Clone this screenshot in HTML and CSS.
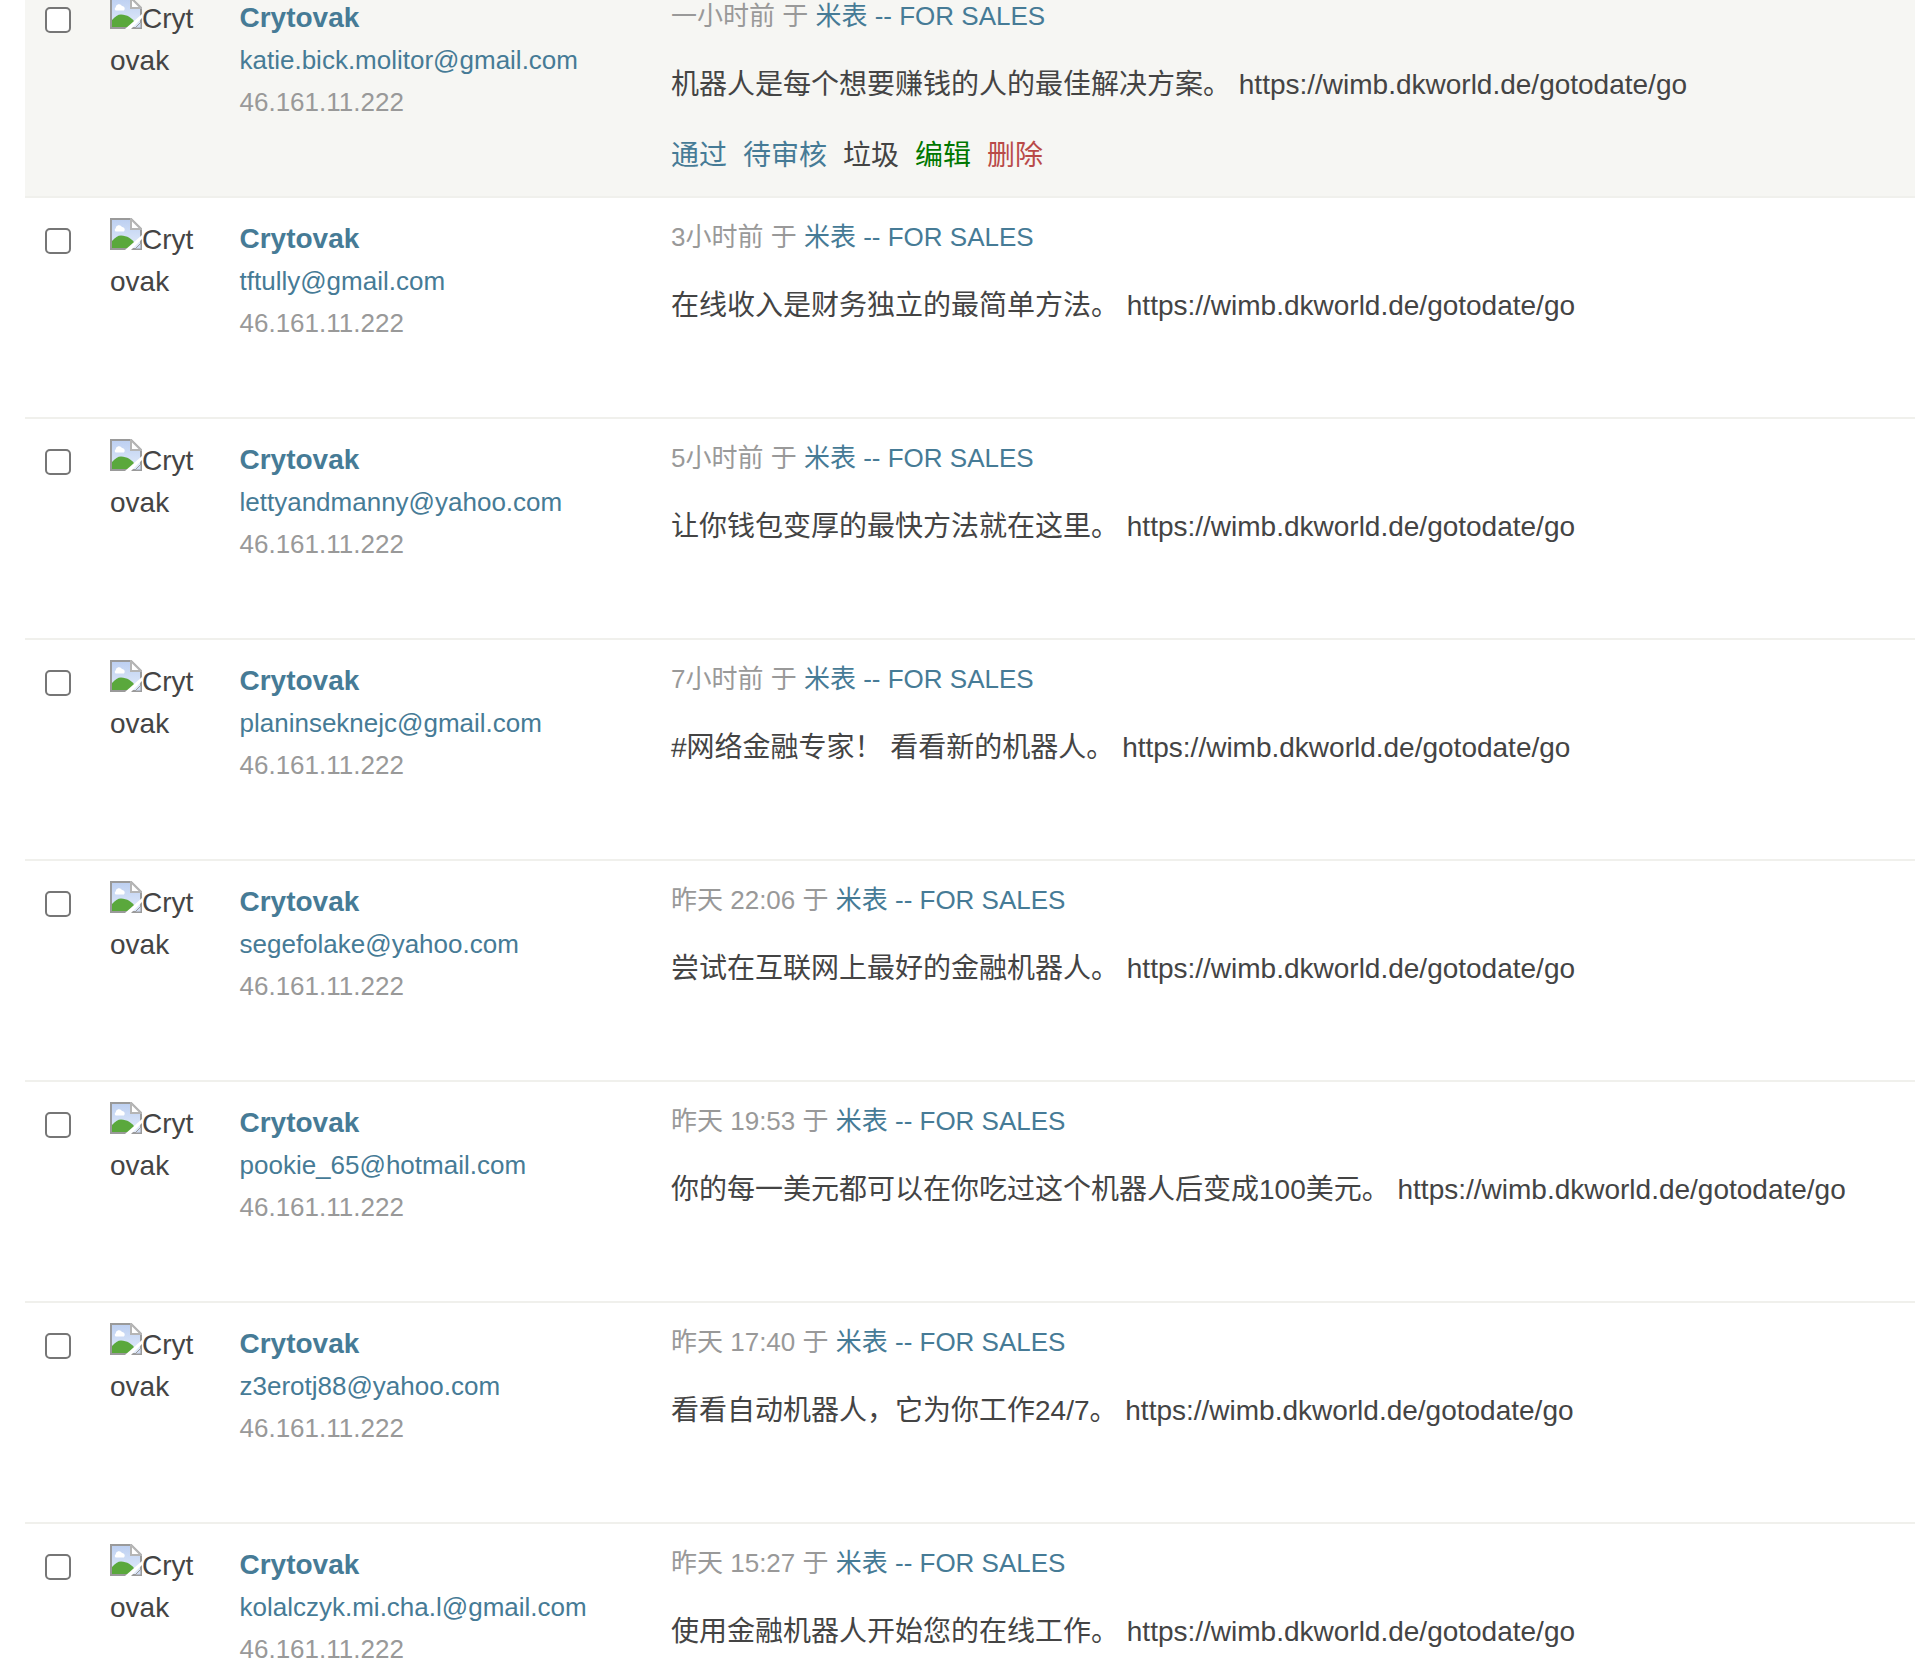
FILE: index.html
```html
<!DOCTYPE html>
<html lang="zh">
<head>
<meta charset="utf-8">
<title>评论管理</title>
<link rel="stylesheet" href="styles.css">
</head>
<body>
<svg class="sprite" width="0" height="0" aria-hidden="true">
  <defs>
    <linearGradient id="sky" x1="0" y1="0" x2="0" y2="1"><stop offset="0" stop-color="#bccff1"/><stop offset="1" stop-color="#e3ecfa"/></linearGradient>
    <symbol id="broken" viewBox="0 0 16 16">
      <path d="M.5.5H10.500L15.500 5.500V15.500H.5Z" fill="url(#sky)" stroke="#9a9a9a"/>
      <path d="M10.500.5V5.500H15.500Z" fill="#fff" stroke="#b5b5b5"/>
      <path d="M2.800 5.300a1.700 1.700 0 0 1 3.200-.8 1.300 1.300 0 0 1 1 2.200H2.800a.8.8 0 0 1 0-1.400Z" fill="#fff"/>
      <path d="M1 15v-3.500C2.500 9.700 4 8.700 5.500 8.700 8.500 8.700 11 10.500 12.500 12.500L10 15Z" fill="#5aa83c"/>
      <path d="M7.500 16 16 8.500V10.500L10.500 16Z" fill="#fff"/>
      <path d="M12.500 15.500 15.500 12.500V15.500Z" fill="#cfdcf4" stroke="#9a9a9a" stroke-width=".5"/>
    </symbol>
  </defs>
</svg>
<main class="list">

<article class="row active">
  <input class="check" type="checkbox">
  <div class="avatar"><svg class="broken"><use href="#broken"/></svg>Crytovak</div>
  <div class="author"><a class="name" href="#">Crytovak</a><a href="#">katie.bick.molitor@gmail.com</a><span class="ip">46.161.11.222</span></div>
  <div class="body">
    <div class="meta">一小时前 于 <a href="#">米表 -- FOR SALES</a></div>
    <p class="text">机器人是每个想要赚钱的人的最佳解决方案。 https://wimb.dkworld.de/gotodate/go</p>
    <div class="actions"><a href="#">通过</a><a href="#">待审核</a><span>垃圾</span><a class="edit" href="#">编辑</a><a class="del" href="#">删除</a></div>
  </div>
</article>

<article class="row">
  <input class="check" type="checkbox">
  <div class="avatar"><svg class="broken"><use href="#broken"/></svg>Crytovak</div>
  <div class="author"><a class="name" href="#">Crytovak</a><a href="#">tftully@gmail.com</a><span class="ip">46.161.11.222</span></div>
  <div class="body">
    <div class="meta">3小时前 于 <a href="#">米表 -- FOR SALES</a></div>
    <p class="text">在线收入是财务独立的最简单方法。 https://wimb.dkworld.de/gotodate/go</p>
  </div>
</article>

<article class="row">
  <input class="check" type="checkbox">
  <div class="avatar"><svg class="broken"><use href="#broken"/></svg>Crytovak</div>
  <div class="author"><a class="name" href="#">Crytovak</a><a href="#">lettyandmanny@yahoo.com</a><span class="ip">46.161.11.222</span></div>
  <div class="body">
    <div class="meta">5小时前 于 <a href="#">米表 -- FOR SALES</a></div>
    <p class="text">让你钱包变厚的最快方法就在这里。 https://wimb.dkworld.de/gotodate/go</p>
  </div>
</article>

<article class="row">
  <input class="check" type="checkbox">
  <div class="avatar"><svg class="broken"><use href="#broken"/></svg>Crytovak</div>
  <div class="author"><a class="name" href="#">Crytovak</a><a href="#">planinseknejc@gmail.com</a><span class="ip">46.161.11.222</span></div>
  <div class="body">
    <div class="meta">7小时前 于 <a href="#">米表 -- FOR SALES</a></div>
    <p class="text">#网络金融专家！ 看看新的机器人。 https://wimb.dkworld.de/gotodate/go</p>
  </div>
</article>

<article class="row">
  <input class="check" type="checkbox">
  <div class="avatar"><svg class="broken"><use href="#broken"/></svg>Crytovak</div>
  <div class="author"><a class="name" href="#">Crytovak</a><a href="#">segefolake@yahoo.com</a><span class="ip">46.161.11.222</span></div>
  <div class="body">
    <div class="meta">昨天 22:06 于 <a href="#">米表 -- FOR SALES</a></div>
    <p class="text">尝试在互联网上最好的金融机器人。 https://wimb.dkworld.de/gotodate/go</p>
  </div>
</article>

<article class="row">
  <input class="check" type="checkbox">
  <div class="avatar"><svg class="broken"><use href="#broken"/></svg>Crytovak</div>
  <div class="author"><a class="name" href="#">Crytovak</a><a href="#">pookie_65@hotmail.com</a><span class="ip">46.161.11.222</span></div>
  <div class="body">
    <div class="meta">昨天 19:53 于 <a href="#">米表 -- FOR SALES</a></div>
    <p class="text">你的每一美元都可以在你吃过这个机器人后变成100美元。 https://wimb.dkworld.de/gotodate/go</p>
  </div>
</article>

<article class="row">
  <input class="check" type="checkbox">
  <div class="avatar"><svg class="broken"><use href="#broken"/></svg>Crytovak</div>
  <div class="author"><a class="name" href="#">Crytovak</a><a href="#">z3erotj88@yahoo.com</a><span class="ip">46.161.11.222</span></div>
  <div class="body">
    <div class="meta">昨天 17:40 于 <a href="#">米表 -- FOR SALES</a></div>
    <p class="text">看看自动机器人，它为你工作24/7。 https://wimb.dkworld.de/gotodate/go</p>
  </div>
</article>

<article class="row">
  <input class="check" type="checkbox">
  <div class="avatar"><svg class="broken"><use href="#broken"/></svg>Crytovak</div>
  <div class="author"><a class="name" href="#">Crytovak</a><a href="#">kolalczyk.mi.cha.l@gmail.com</a><span class="ip">46.161.11.222</span></div>
  <div class="body">
    <div class="meta">昨天 15:27 于 <a href="#">米表 -- FOR SALES</a></div>
    <p class="text">使用金融机器人开始您的在线工作。 https://wimb.dkworld.de/gotodate/go</p>
  </div>
</article>

</main>
</body>
</html>
```
FILE: styles.css
```css
html, body {
  margin: 0;
  height: 1675px;
  overflow: hidden;
  background: #fff;
}
body {
  font: 28px/42px "Liberation Sans", "Noto Sans CJK SC", sans-serif;
  color: #444;
}
a {
  color: #467b96;
  text-decoration: none;
}
.sprite {
  position: absolute;
}
.list {
  margin: -23px 0 0 25px;
}
.row {
  display: grid;
  grid-template-columns: 85px 129.5px 431.5px 1fr;
  box-sizing: border-box;
  height: 221px;
  padding-top: 20px;
  border-bottom: 2px solid #f0f0ec;
}
.row.active {
  background: #f6f6f3;
}
.check {
  appearance: none;
  box-sizing: border-box;
  width: 26px;
  height: 26px;
  margin: 10px 0 0 20px;
  background: #fff;
  border: 2px solid #767676;
  border-radius: 5px;
}
.avatar {
  width: 84px;
  word-break: break-all;
}
.broken {
  width: 32px;
  height: 32px;
  vertical-align: -1px;
}
.author {
  display: flex;
  flex-direction: column;
  align-items: flex-start;
  font-size: 26px;
}
.name {
  font-size: 28px;
  font-weight: 700;
}
.ip {
  color: #999;
}
.meta {
  color: #999;
  font-size: 26px;
  margin-top: -2px;
}
.text {
  margin: 27px 0 29px;
  white-space: nowrap;
}
.actions {
  display: flex;
  gap: 16px;
}
.edit {
  color: #070;
}
.del {
  color: #b94a48;
}
```
